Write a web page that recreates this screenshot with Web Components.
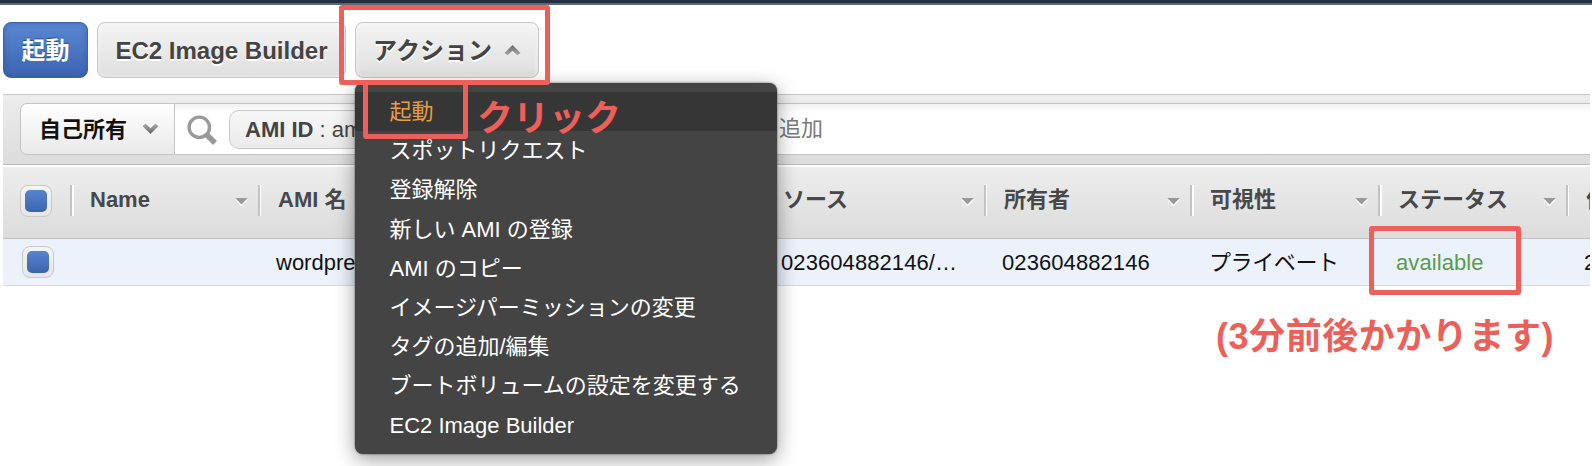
<!DOCTYPE html>
<html lang="ja"><head><meta charset="utf-8"><title>EC2 AMI</title>
<style>
html,body{margin:0;background:#fff}
body{width:1592px;height:466px;overflow:hidden;position:relative;font-family:"Liberation Sans","Noto Sans CJK JP",sans-serif;font-size:22px;color:#111}
</style></head><body>
<ami-page></ami-page>
<script>
const def=(name,html)=>{const t=document.createElement('template');t.innerHTML=html;
customElements.define(name,class extends HTMLElement{constructor(){super();this.attachShadow({mode:'open'}).append(t.content.cloneNode(true));}});};

def('ui-button',`<style>
:host{display:flex;box-sizing:border-box;height:56px;align-items:center;justify-content:center;border:1.5px solid #c6c6c6;border-radius:8px;background:linear-gradient(#f4f4f4,#dfdfdf);box-shadow:inset 0 0 5px #fff8;color:#444;font-weight:700;font-size:24px;text-shadow:0 2px 0 #fff;white-space:nowrap;gap:12px;line-height:54px}
:host([primary]){background:linear-gradient(#5a87d2,#3c64b0);border-color:#3a63ae;color:#fff;text-shadow:0 -1px 1px #2b4f97;box-shadow:inset 0 0 5px #2f559c99}
</style><slot></slot>`);

def('chevron-icon',`<style>:host{display:block;width:17px;height:12px}:host([up]) svg{transform:rotate(180deg)}svg{display:block}</style>
<svg width="17" height="12" viewBox="0 0 17 12"><defs><linearGradient id="g" x2="0" y2="1"><stop stop-color="#aaa"/><stop offset="1" stop-color="#666"/></linearGradient></defs><path d="M.5 3 3.6 .7 8.5 5.2 13.4 .7 16.5 3 8.5 11Z" fill="url(#g)"/></svg>`);

def('search-icon',`<style>:host{display:block;width:31px;height:31px}svg{display:block}</style>
<svg width="31" height="31" viewBox="0 0 31 31" fill="none" stroke="#999"><circle cx="12.3" cy="12.3" r="10.2" stroke-width="3.4"/><path d="M19.5 19.5 28 28" stroke-width="5.5"/></svg>`);

def('check-box',`<style>:host{display:grid;place-items:center;box-sizing:border-box;width:32px;height:32px;border:1.7px solid #c9c9c9;border-radius:8px;background:linear-gradient(#f5f5f5,#e6e6e6)}
i{width:22px;height:22px;border-radius:5px;background:linear-gradient(#5784d0,#3c64ae)}</style><i></i>`);

def('tool-bar',`<style>:host{display:flex;gap:9px;padding:17px 0 0 3px;height:72px}
.a{width:85px}.b{width:249px}.c{width:184px}
.jp{padding-top:1px}.en{padding-top:2px}</style>
<ui-button class="a" primary><span class="jp">起動</span></ui-button>
<ui-button class="b"><span class="en">EC2 Image Builder</span></ui-button>
<ui-button class="c"><span class="jp">アクション</span><chevron-icon up></chevron-icon></ui-button>`);

def('filter-bar',`<style>
:host{display:flex;box-sizing:border-box;height:71px;margin:0 2px 0 3px;border-top:1.5px solid #c7c7c7;border-bottom:1px solid #bbb;background:linear-gradient(#ededed,#dcdcdc);padding:8px 0 0 17px}
.own{box-sizing:border-box;width:155px;height:52px;border:1.5px solid #c4c4c4;border-radius:7px 0 0 7px;background:linear-gradient(#fff,#e9e9e9);display:flex;align-items:center;gap:15px;padding-left:18px;font-weight:700;color:#111;white-space:nowrap}
.own span{padding-bottom:4px}
.field{box-sizing:border-box;height:52px;flex:1;min-width:0;overflow:hidden;border:solid #c4c4c4;border-width:1.5px 0;background:linear-gradient(#f2f2f2,#fff 9px);display:flex;align-items:center;padding-left:12px}
search-icon{margin-top:3px}
.tok{box-sizing:border-box;height:39px;width:400px;margin-left:11px;border:1.5px solid #c9c9c9;border-radius:10px;background:linear-gradient(#f7f7f7,#ebebeb);color:#444;padding-left:15px;line-height:37px;white-space:nowrap}
.add{margin-left:150px;color:#7a7a7a;line-height:40px}
</style><div class="own"><span>自己所有</span><chevron-icon></chevron-icon></div>
<div class="field"><search-icon></search-icon><div class="tok"><b>AMI ID</b> : ami</div><span class="add">追加</span></div>`);

def('column-head',`<style>:host{display:flex;align-items:center;justify-content:space-between;box-sizing:border-box;height:72px;font-weight:700;color:#484848;white-space:nowrap;padding:0 9px 7px 20px;overflow:hidden;background:linear-gradient(90deg,#c3c3c3 2px,#fff 2px,#fff 3.5px,transparent 3.5px) 0 18px/100% 31px no-repeat;line-height:40px}
svg{display:block;flex:none;margin-top:6px}</style><slot></slot><svg width="15" height="11"><path d="M1 2.5h13L7.5 9.5z" fill="#fff"/><path d="M1.3 1h12.4L7.5 7.6z" fill="#999"/></svg>`);

def('ami-table',`<style>
:host{display:block;margin:0 2px 0 3px}
.h,.r{display:grid;grid-template-columns:67px 188px 507px 219px 206px 188px 188px 24px;overflow:hidden}
.h{height:74px;box-sizing:border-box;border-top:2px solid #fff;border-bottom:1.5px solid #c2c2c2;background:linear-gradient(#ededed,#dcdcdc)}
.h check-box{margin:18px 0 0 17px}
.r{height:46px;line-height:47px;background:#ebf2fc;border-bottom:1.5px solid #d9d9d9;color:#111;white-space:nowrap}
.r check-box{margin:7px 0 0 19px}
.r span{padding-left:18px;overflow:hidden}
.r .n{letter-spacing:.08px}
.r .ok{color:#5b9b4c;letter-spacing:.08px}
</style>
<div class="h"><check-box></check-box><column-head>Name</column-head><column-head>AMI 名</column-head><column-head style="padding-left:18px">ソース</column-head><column-head>所有者</column-head><column-head>可視性</column-head><column-head>ステータス</column-head><column-head>作成日</column-head></div>
<div class="r"><check-box></check-box><span></span><span>wordpress</span><span class="n" style="padding-left:16px">023604882146/…</span><span class="n">023604882146</span><span style="letter-spacing:-.4px;padding-left:19px">プライベート</span><span class="ok">available</span><span>2020</span></div>`);

def('menu-item',`<style>:host{display:block;height:39.2px;line-height:39.2px;padding-left:34.5px;color:#fff;white-space:nowrap}
:host([active]){background:#363636;color:#e59e45}</style><slot></slot>`);

def('action-menu',`<style>:host{display:block;position:absolute;left:355px;top:83px;width:422px;height:371px;box-sizing:border-box;padding-top:9px;border-radius:8px;background:#444;box-shadow:0 5px 20px #0006,0 0 2px #000a}</style>
<menu-item active>起動</menu-item><menu-item>スポットリクエスト</menu-item><menu-item>登録解除</menu-item><menu-item>新しい AMI の登録</menu-item><menu-item>AMI のコピー</menu-item><menu-item>イメージパーミッションの変更</menu-item><menu-item>タグの追加/編集</menu-item><menu-item>ブートボリュームの設定を変更する</menu-item><menu-item style="padding-top:.8px">EC2 Image Builder</menu-item>`);

def('mark-box',`<style>:host{display:block;position:absolute;box-sizing:border-box;border:5px solid #ed5f59;border-radius:3px}</style>`);
def('mark-note',`<style>:host{display:block;position:absolute;color:#ed5f59;font-size:36px;font-weight:700;line-height:44px;white-space:nowrap}</style><slot></slot>`);

def('ami-page',`<style>:host{display:block}
.top{height:5px;background:linear-gradient(#232f3e 3px,#5d6672 3px)}</style>
<div class="top"></div><tool-bar></tool-bar><filter-bar></filter-bar><ami-table></ami-table>
<action-menu></action-menu>
<mark-box style="left:339px;top:5px;width:211px;height:80px"></mark-box>
<mark-box style="left:363px;top:80px;width:105px;height:59px"></mark-box>
<mark-box style="left:1369px;top:226px;width:152px;height:69px"></mark-box>
<mark-note style="left:477px;top:97px">クリック</mark-note>
<mark-note style="left:1216px;top:315px;letter-spacing:.55px">(3分前後かかります)</mark-note>`);
</script></body></html>
